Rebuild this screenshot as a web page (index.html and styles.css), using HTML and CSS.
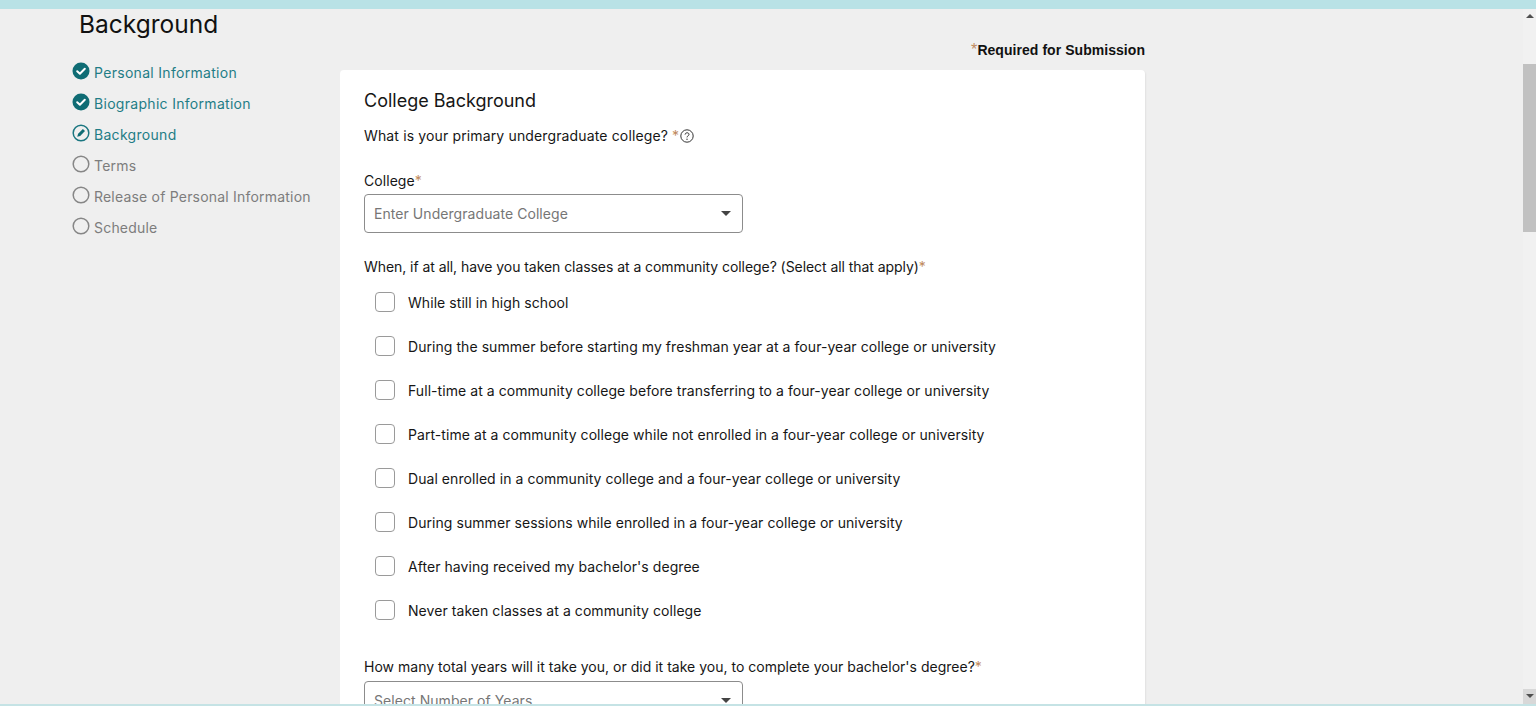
FILE: index.html
```html
<!DOCTYPE html>
<html>
    <head>
        <title>Background</title>
        <link rel="stylesheet" href="styles.css">
    </head>
    <body>
        <div class="topbar"></div>
        <div class="viewport">
            <div class="page">
                <h1 class="page_title">Background</h1>
                <div class="columns">
                    <ul class="steps">
                        <li class="step done">
                            <svg class="step_icon" viewBox="0 0 18 18"><circle cx="9" cy="9" r="8.5" fill="#0f6c74"/><path d="M5.2 9.2l2.7 2.6 4.9-5" fill="none" stroke="#fff" stroke-width="2" stroke-linecap="round" stroke-linejoin="round"/></svg>
                            Personal Information
                        </li>
                        <li class="step done">
                            <svg class="step_icon" viewBox="0 0 18 18"><circle cx="9" cy="9" r="8.5" fill="#0f6c74"/><path d="M5.2 9.2l2.7 2.6 4.9-5" fill="none" stroke="#fff" stroke-width="2" stroke-linecap="round" stroke-linejoin="round"/></svg>
                            Biographic Information
                        </li>
                        <li class="step done">
                            <svg class="step_icon" viewBox="0 0 18 18"><circle cx="9" cy="9" r="7.8" fill="none" stroke="#1a7680" stroke-width="1.5"/><path d="M5.2 12.8l.9-3 4.8-4.8 2.1 2.1-4.8 4.8z" fill="#0f6c74"/></svg>
                            Background
                        </li>
                        <li class="step">
                            <svg class="step_icon" viewBox="0 0 18 18"><circle cx="9" cy="9" r="7.8" fill="none" stroke="#868686" stroke-width="1.5"/></svg>
                            Terms
                        </li>
                        <li class="step">
                            <svg class="step_icon" viewBox="0 0 18 18"><circle cx="9" cy="9" r="7.8" fill="none" stroke="#868686" stroke-width="1.5"/></svg>
                            Release of Personal Information
                        </li>
                        <li class="step">
                            <svg class="step_icon" viewBox="0 0 18 18"><circle cx="9" cy="9" r="7.8" fill="none" stroke="#868686" stroke-width="1.5"/></svg>
                            Schedule
                        </li>
                    </ul>
                    <div class="main">
                        <div class="required"><span class="star">*</span>Required for Submission</div>
                        <div class="card">
                            <h2 class="card_title">College Background</h2>
                            <div class="question first">What is your primary undergraduate college? <span class="star">*</span><svg class="help" viewBox="0 0 14 14"><circle cx="7" cy="7" r="6.2" fill="none" stroke="#333" stroke-width="1"/><path d="M5.1 5.6c0-2.4 3.9-2.4 3.9-.2 0 1.4-2 1.5-2 3" fill="none" stroke="#333" stroke-width="1"/><circle cx="7" cy="10.2" r=".7" fill="#333"/></svg></div>
                            <div class="field_label">College<span class="star">*</span></div>
                            <div class="select"><span>Enter Undergraduate College</span><i class="caret"></i></div>
                            <div class="question second">When, if at all, have you taken classes at a community college? (Select all that apply)<span class="star">*</span></div>
                            <div class="options">
                                <label class="option"><span class="box"></span>While still in high school</label>
                                <label class="option"><span class="box"></span>During the summer before starting my freshman year at a four-year college or university</label>
                                <label class="option"><span class="box"></span>Full-time at a community college before transferring to a four-year college or university</label>
                                <label class="option"><span class="box"></span>Part-time at a community college while not enrolled in a four-year college or university</label>
                                <label class="option"><span class="box"></span>Dual enrolled in a community college and a four-year college or university</label>
                                <label class="option"><span class="box"></span>During summer sessions while enrolled in a four-year college or university</label>
                                <label class="option"><span class="box"></span>After having received my bachelor's degree</label>
                                <label class="option"><span class="box"></span>Never taken classes at a community college</label>
                            </div>
                            <div class="question third">How many total years will it take you, or did it take you, to complete your bachelor's degree?<span class="star">*</span></div>
                            <div class="select"><span>Select Number of Years</span><i class="caret"></i></div>
                        </div>
                    </div>
                </div>
            </div>
            <div class="scrollbar">
                <div class="arrow up"></div>
                <div class="track"><div class="thumb"></div></div>
                <div class="arrow down"></div>
            </div>
        </div>
        <div class="bottombar"></div>
    </body>
</html>
```

FILE: styles.css
```css
html, body {
    height: 100%;
}
body {
    margin: 0;
    display: flex;
    flex-direction: column;
    overflow: hidden;
    background: #efefef;
    color: #161616;
    font-family: "Inter", "Liberation Sans", sans-serif;
    font-size: 14px;
    font-weight: 430;
    letter-spacing: .06px;
}
.topbar {
    height: 9px;
    flex: none;
    background: #b9e2e6;
}
.bottombar {
    height: 2px;
    flex: none;
    background: #c5e3e5;
}
.viewport {
    flex: 1;
    min-height: 0;
    display: flex;
}
.page {
    flex: 1;
    min-width: 0;
    overflow: hidden;
}
.page_title {
    margin: 0 0 0 79px;
    height: 30px;
    line-height: 30px;
    font-size: 24.5px;
    font-weight: 400;
    letter-spacing: 0;
    color: #111;
}
.columns {
    display: flex;
    padding-left: 72px;
}
.steps {
    list-style: none;
    width: 268px;
    flex: none;
    margin: 0;
    padding: 18px 0 0;
}
.step {
    display: flex;
    align-items: center;
    gap: 4px;
    height: 31px;
    color: #7d7d7d;
    letter-spacing: .2px;
    white-space: nowrap;
}
.step.done {
    color: #1f7d86;
    letter-spacing: .3px;
}
.step_icon {
    width: 18px;
    height: 18px;
    flex: none;
    margin-top: -4px;
}
.main {
    width: 805px;
    flex: none;
}
.required {
    height: 31px;
    line-height: 23px;
    text-align: right;
    font-family: "Liberation Sans", sans-serif;
    font-size: 14px;
    font-weight: 700;
    letter-spacing: .05px;
    color: #111;
}
.star {
    color: #c08a5e;
    font-weight: 400;
}
.required .star {
    font-size: 16px;
    line-height: 1;
}
.card {
    background: #fff;
    border-radius: 4px;
    padding: 20px 24px;
    box-shadow: 1px 1px 2px rgba(0, 0, 0, .06);
}
.card_title {
    margin: 0;
    height: 22px;
    line-height: 22px;
    font-size: 18px;
    font-weight: 400;
    letter-spacing: 0;
}
.question {
    line-height: 20px;
    white-space: nowrap;
}
.question.first {
    display: flex;
    align-items: center;
    margin-top: 14px;
    letter-spacing: .14px;
}
.question.first .star {
    margin-left: 4px;
}
.help {
    width: 14px;
    height: 14px;
    margin-left: 1px;
}
.question.second {
    margin-top: 24px;
    letter-spacing: -.06px;
}
.question.third {
    margin-top: 25px;
    letter-spacing: .01px;
}
.field_label {
    margin-top: 25px;
    line-height: 20px;
}
.select {
    display: flex;
    align-items: center;
    justify-content: space-between;
    box-sizing: border-box;
    width: 379px;
    height: 39px;
    margin-top: 3px;
    padding: 0 10px 0 9px;
    border: 1px solid #8c8c8c;
    border-radius: 4px;
    color: #767676;
}
.question.third + .select {
    margin-top: 4px;
}
.caret {
    width: 0;
    height: 0;
    margin-right: 1px;
    border-left: 5px solid transparent;
    border-right: 5px solid transparent;
    border-top: 5px solid #444;
}
.options {
    margin-top: 3px;
    padding-left: 10.5px;
}
.option {
    display: flex;
    align-items: center;
    gap: 13.5px;
    height: 44px;
    white-space: nowrap;
}
.box {
    box-sizing: border-box;
    width: 20px;
    height: 20px;
    flex: none;
    background: #fff;
    border: 1px solid #9a9a9a;
    border-radius: 4px;
}
.scrollbar {
    width: 13px;
    flex: none;
    display: flex;
    flex-direction: column;
    background: #f1f1f1;
}
.arrow {
    height: 13px;
    flex: none;
    position: relative;
}
.arrow.up::after, .arrow.down::after {
    content: "";
    position: absolute;
    left: 3px;
    border-left: 4px solid transparent;
    border-right: 4px solid transparent;
}
.arrow.up::after {
    top: 5px;
    border-bottom: 4px solid #505050;
}
.arrow.down {
    background: #d8d8d8;
    height: 15px;
}
.arrow.down::after {
    top: 5px;
    border-top: 4px solid #505050;
}
.track {
    flex: 1;
    padding-top: 42px;
}
.thumb {
    height: 168px;
    background: #c1c1c1;
}
```
